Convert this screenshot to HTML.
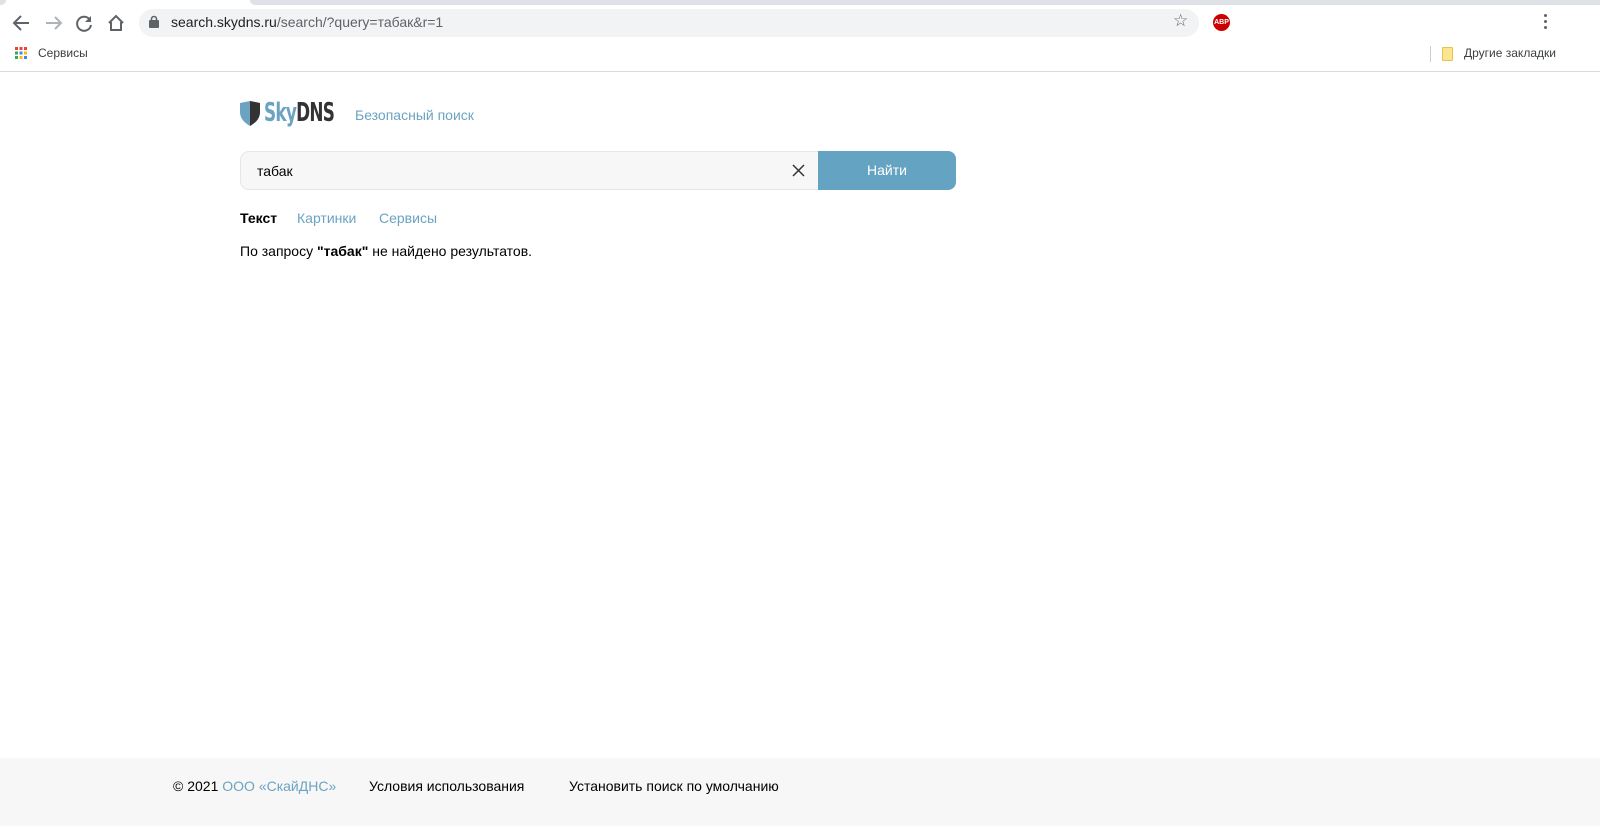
<!DOCTYPE html>
<html><head><meta charset="utf-8"><style>
*{margin:0;padding:0;box-sizing:border-box}
body{width:1600px;height:826px;position:relative;background:#fff;font-family:"Liberation Sans","DejaVu Sans",sans-serif;overflow:hidden}
.abs{position:absolute}
.t{font-size:14px;color:#000;white-space:nowrap}
</style></head><body>
<div class="abs" style="left:0;top:0;width:1600px;height:5px;background:#fff"></div>
<div class="abs" style="left:250px;top:0;width:1350px;height:5px;background:#dee1e6;border-bottom-left-radius:6px"></div>
<div class="abs" style="left:0;top:0;width:6px;height:5px;background:#dee1e6;border-bottom-right-radius:6px"></div>
<svg class="abs" style="left:10px;top:12px" width="130" height="22" viewBox="0 0 130 22">
<path d="M19 11H5M11 4l-7 7 7 7" stroke="#5f6368" stroke-width="2" fill="none"/>
<path d="M36 11h14M45 5l6 6-6 6" stroke="#b0b3b7" stroke-width="2" fill="none"/>
<path d="M80 8a7 7 0 1 0 1 5" stroke="#5f6368" stroke-width="2" fill="none"/><path d="M81 4v6h-6z" fill="#5f6368"/>
<path d="M99 11l7-7 7 7M101 10v8h10v-8" stroke="#5f6368" stroke-width="2" fill="none"/>
</svg>
<div class="abs" style="left:139px;top:9px;width:1060px;height:28px;background:#f1f3f4;border-radius:14px"></div>
<svg class="abs" style="left:149px;top:15px" width="10" height="13"><rect x="0" y="5" width="10" height="8" rx="1" fill="#5f6368"/><path d="M2.5 6V4a2.5 2.5 0 0 1 5 0v2" stroke="#5f6368" stroke-width="1.6" fill="none"/></svg>
<div class="abs" style="left:171px;top:14px;font-size:14px;color:#202124">search.skydns.ru<span style="color:#5f6368">/search/?query=табак&amp;r=1</span></div>
<div class="abs" style="left:1173px;top:11px;font-size:17px;color:#5f6368">☆</div>
<div class="abs" style="left:1213px;top:14px;width:17px;height:17px;border-radius:50%;background:#c00;color:#fff;font-size:7px;font-weight:bold;text-align:center;line-height:17px">ABP</div>
<div class="abs" style="left:1544px;top:14px;width:4px;font-size:0">
<div style="width:3px;height:3px;background:#5f6368;border-radius:50%;margin-bottom:3px"></div><div style="width:3px;height:3px;background:#5f6368;border-radius:50%;margin-bottom:3px"></div><div style="width:3px;height:3px;background:#5f6368;border-radius:50%"></div></div>
<svg class="abs" style="left:15px;top:47px" width="12" height="12">
<rect x="0" y="0" width="3" height="3" fill="#ea4335"/><rect x="4.5" y="0" width="3" height="3" fill="#ea4335"/><rect x="9" y="0" width="3" height="3" fill="#ea4335"/>
<rect x="0" y="4.5" width="3" height="3" fill="#34a853"/><rect x="4.5" y="4.5" width="3" height="3" fill="#4285f4"/><rect x="9" y="4.5" width="3" height="3" fill="#fbbc05"/>
<rect x="0" y="9" width="3" height="3" fill="#34a853"/><rect x="4.5" y="9" width="3" height="3" fill="#fbbc05"/><rect x="9" y="9" width="3" height="3" fill="#4285f4"/></svg>
<div class="abs" style="left:38px;top:46px;font-size:12px;color:#3c4043">Сервисы</div>
<div class="abs" style="left:1430px;top:46px;width:1px;height:16px;background:#ccc"></div>
<div class="abs" style="left:1442px;top:47px;width:11px;height:14px;background:#fde48f;border:1px solid #e3c453;border-radius:1px"></div>
<div class="abs" style="left:1464px;top:46px;font-size:12px;color:#3c4043">Другие закладки</div>
<div class="abs" style="left:0;top:71px;width:1600px;height:1px;background:#dadce0"></div>
<svg class="abs" style="left:240px;top:101px" width="20" height="25" viewBox="0 0 20 25"><path d="M0 2L10 0l10 2v9c0 7-5 11-10 14C5 22 0 18 0 11z" fill="#6ba3c1"/><path d="M10 0l10 2v9c0 7-5 11-10 14z" fill="#333"/></svg>
<div class="abs" style="left:264px;top:98px;font-family:'DejaVu Sans Condensed','Liberation Sans Narrow',sans-serif;font-weight:bold;font-size:26px;letter-spacing:-1px;transform:scaleX(0.72);transform-origin:left;white-space:nowrap"><span style="color:#6ba3c1">Sky</span><span style="color:#333">DNS</span></div>
<div class="abs" style="left:355px;top:107px;font-size:14px;color:#6ba3c1">Безопасный поиск</div>
<div class="abs" style="left:240px;top:151px;width:590px;height:39px;background:#f7f7f7;border:1px solid #e6e6e6;border-radius:9px 0 0 9px"></div>
<div class="abs t" style="left:257px;top:163px">табак</div>
<svg class="abs" style="left:792px;top:164px" width="13" height="13"><path d="M1 1l11 11M12 1L1 12" stroke="#333" stroke-width="1.5"/></svg>
<div class="abs" style="left:818px;top:151px;width:138px;height:39px;background:#65a3c3;border-radius:0 8px 8px 0;color:#fff;font-size:14px;text-align:center;line-height:39px">Найти</div>
<div class="abs t" style="left:240px;top:210px;font-weight:bold">Текст</div>
<div class="abs t" style="left:297px;top:210px;color:#6ba3c1">Картинки</div>
<div class="abs t" style="left:379px;top:210px;color:#6ba3c1">Сервисы</div>
<div class="abs t" style="left:240px;top:243px">По запросу <b>"табак"</b> не найдено результатов.</div>
<div class="abs" style="left:0;top:758px;width:1600px;height:68px;background:#f7f7f7"></div>
<div class="abs t" style="left:173px;top:778px">© 2021 <span style="color:#6ba3c1">ООО «СкайДНС»</span></div>
<div class="abs t" style="left:369px;top:778px">Условия использования</div>
<div class="abs t" style="left:569px;top:778px">Установить поиск по умолчанию</div>
</body></html>
